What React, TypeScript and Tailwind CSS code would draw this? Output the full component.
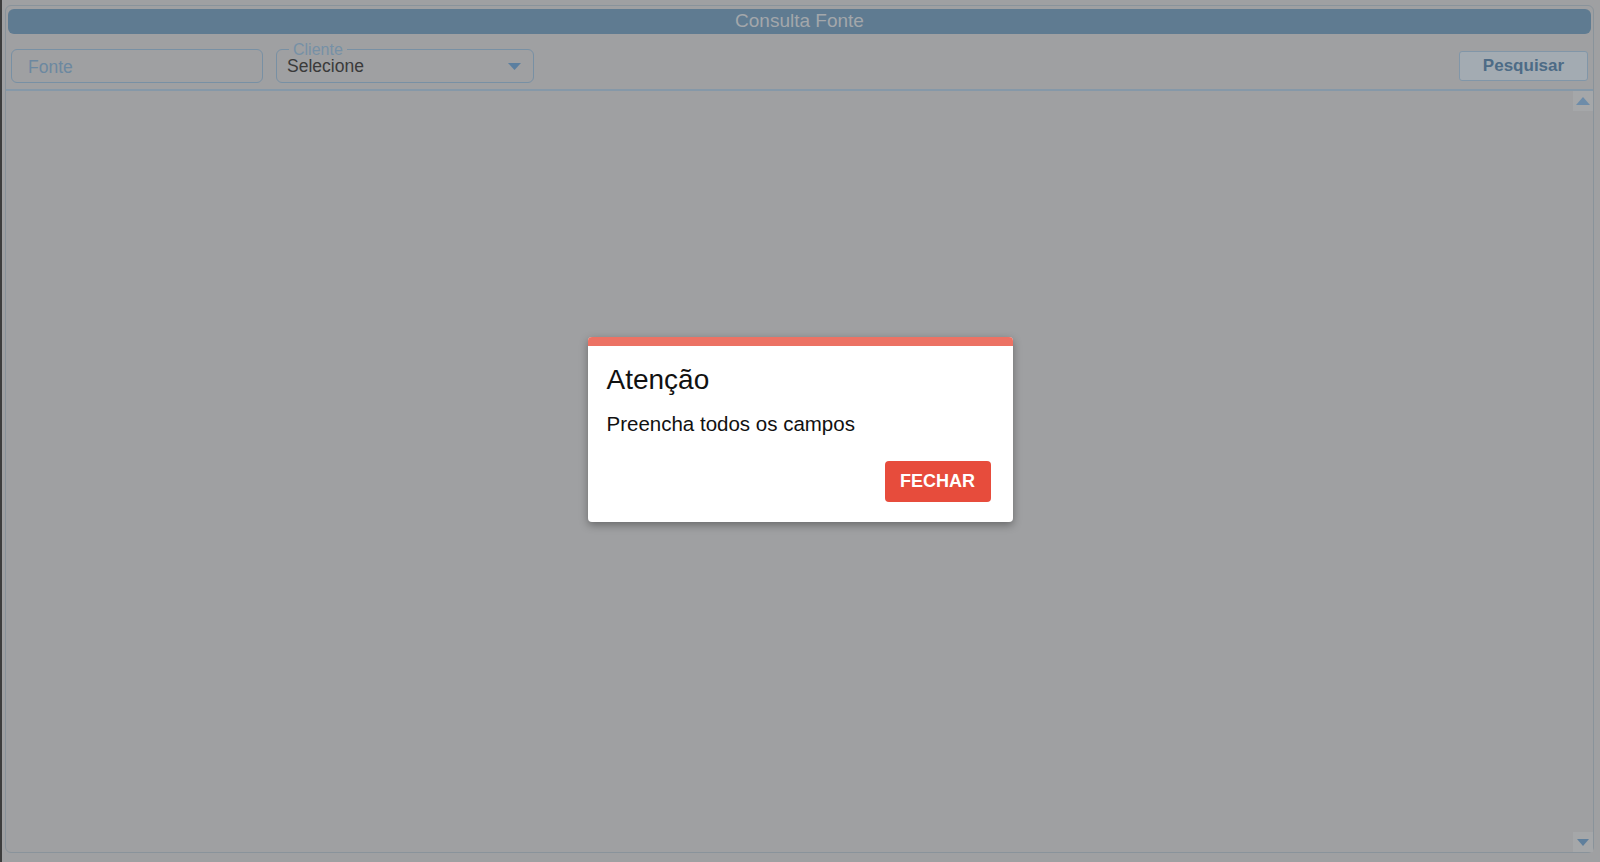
import React from "react";

export default function App() {
  return (
    <div className="relative flex h-[862px] w-full overflow-hidden bg-[#9fa0a2] font-['Liberation_Sans',Arial,sans-serif]">
      <div className="w-[2px] shrink-0 bg-[#3d3d3d]" />
      <div className="flex flex-1 pl-[3px] pr-[6px] pt-[5px] pb-[9px]">
        <div className="flex flex-1 flex-col rounded-[6px] border border-[#89939b]">
          <div className="px-[2px] pt-[3px]">
            <div className="flex h-[25px] items-center justify-center rounded-[6px] bg-[#5f7b91] text-[19px] text-[#a3a7ab]">
              Consulta Fonte
            </div>
          </div>
          <div className="flex items-center px-[5px] pt-[15px] pb-[6px]">
            <div className="flex h-[34px] w-[252px] items-center rounded-[6px] border border-[#7890a4] pl-[16px] text-[17.5px] text-[#6c88a0]">
              <span className="mt-[2px]">Fonte</span>
            </div>
            <div className="relative ml-[13px] flex h-[34px] w-[258px] items-center rounded-[6px] border border-[#7890a4] pl-[10px] text-[17.5px] text-[#3a3a3a]">
              <span className="absolute left-[12px] top-[-9px] bg-[#9fa0a2] px-[4px] text-[16px] leading-[18px] text-[#7690a6]">
                Cliente
              </span>
              <span className="mt-[1px]">Selecione</span>
              <svg className="absolute right-[12px] top-[13px]" width="13" height="7" viewBox="0 0 13 7">
                <path d="M0 0 L13 0 L6.5 7 Z" fill="#5b7fa0" />
              </svg>
            </div>
            <div className="flex-1" />
            <button className="h-[30px] w-[129px] rounded-[3px] border border-[#8196a8] bg-[#a3abb2] text-[17px] font-bold text-[#4d6b86]">
              Pesquisar
            </button>
          </div>
          <div className="flex flex-1 border-t-2 border-[#8598a8]">
            <div className="flex-1" />
            <div className="flex w-[20px] flex-col justify-between">
              <div className="flex h-[20px] items-center justify-center bg-[#a5a7a9]">
                <svg width="14" height="8" viewBox="0 0 14 8">
                  <path d="M0 8 L14 8 L7 0 Z" fill="#6d8ca9" />
                </svg>
              </div>
              <div className="flex h-[20px] items-center justify-center bg-[#a5a7a9]">
                <svg width="12" height="7" viewBox="0 0 12 7">
                  <path d="M0 0 L12 0 L6 7 Z" fill="#5f7f9c" />
                </svg>
              </div>
            </div>
          </div>
        </div>
      </div>

      <div className="absolute inset-0 flex items-center justify-center">
        <div className="-mt-[3px] w-[425px] overflow-hidden rounded-[4px] bg-white shadow-[0_3px_8px_rgba(0,0,0,0.35)]">
          <div className="h-[9px] bg-[#ec7264]" />
          <div className="px-[19px] pt-[17px] pb-[20px] pr-[22px]">
            <div className="text-[28px] leading-[34px] text-[#111]">Atenção</div>
            <div className="mt-[15px] text-[20.5px] leading-[24px] text-[#111]">Preencha todos os campos</div>
            <div className="mt-[25px] flex justify-end">
              <button className="h-[41px] w-[106px] rounded-[4px] bg-[#e74c3c] text-[18px] font-bold text-white">
                FECHAR
              </button>
            </div>
          </div>
        </div>
      </div>
    </div>
  );
}
